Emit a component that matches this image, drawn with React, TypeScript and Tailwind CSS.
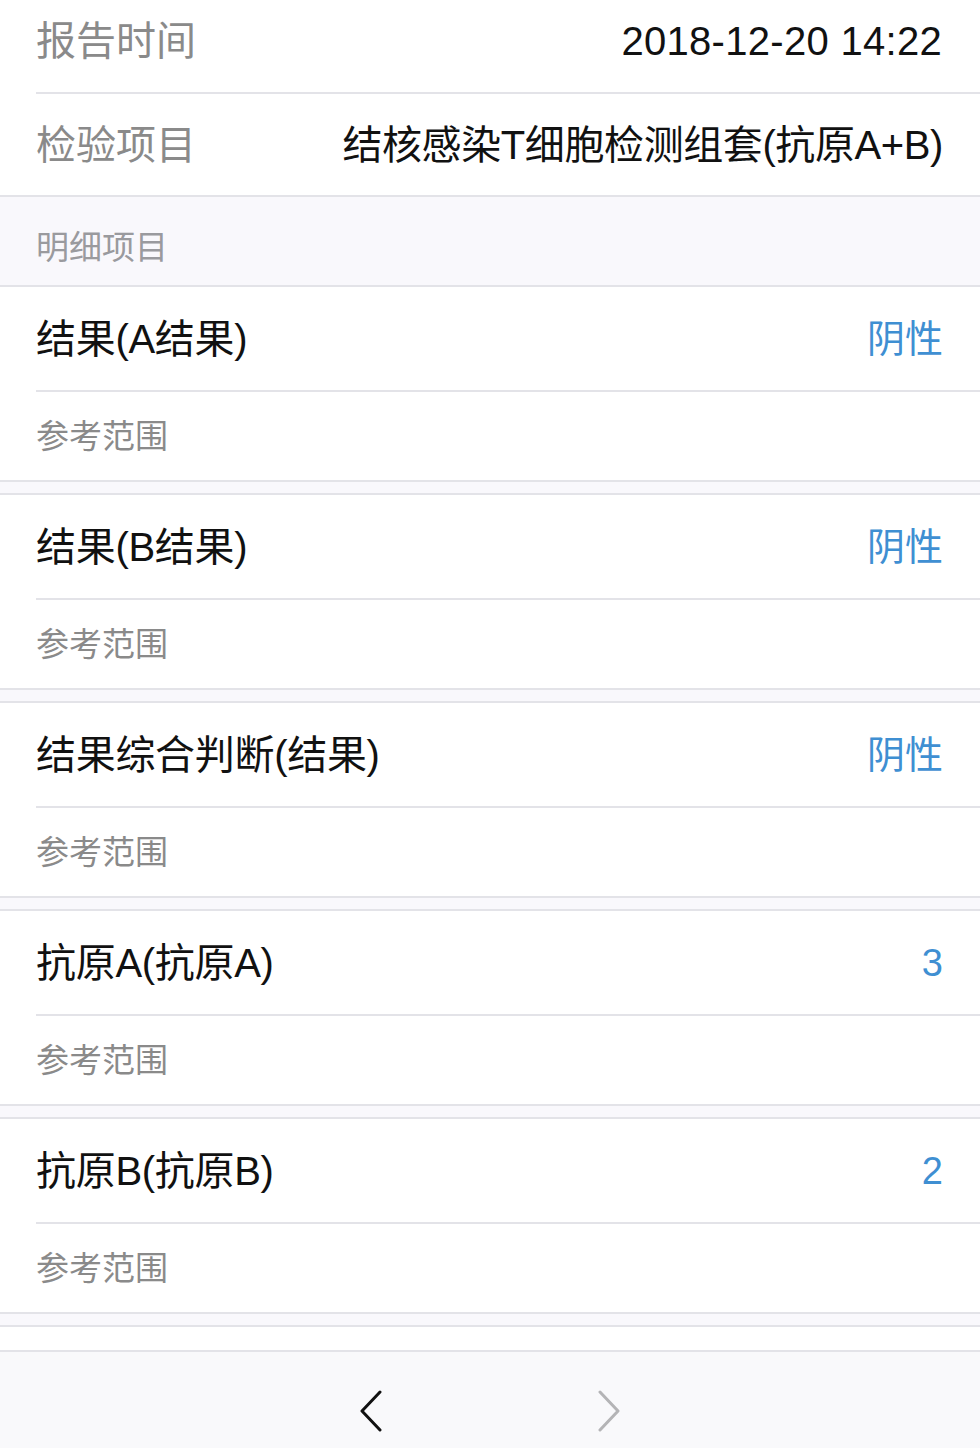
const items = [
  { name: "结果(A结果)", value: "阴性" },
  { name: "结果(B结果)", value: "阴性" },
  { name: "结果综合判断(结果)", value: "阴性" },
  { name: "抗原A(抗原A)", value: "3" },
  { name: "抗原B(抗原B)", value: "2" },
];

const font = {
  fontFamily: '"Liberation Sans", "Noto Sans CJK SC", sans-serif',
};

function ResultGroup({ name, value }: { name: string; value: string }) {
  return (
    <div>
      <div className="border-t-2 border-[#e3e3e8] bg-white">
        <div className="ml-[36px] flex h-[105px] items-center justify-between border-b-2 border-[#e3e3e8] pr-[37px]">
          <span className="text-[40px] leading-[44px] tracking-[-0.3px] text-[#111]">{name}</span>
          <span className="text-[38px] leading-[44px] text-[#3f8fd2]">{value}</span>
        </div>
        <div className="flex h-[88px] items-center pl-[36px] pt-[2px]">
          <span className="text-[33px] leading-[36px] text-[#8a8a8a]">参考范围</span>
        </div>
      </div>
      <div className="h-[13px] border-t-2 border-[#e3e3e8] bg-[#f9f8fc]" />
    </div>
  );
}

export default function App() {
  return (
    <div className="flex h-[1448px] w-[980px] flex-col overflow-hidden bg-white" style={font}>
      <div className="bg-white">
        <div className="ml-[36px] flex h-[94px] items-center justify-between border-b-2 border-[#e3e3e8] pb-[10px] pr-[38px]">
          <span className="text-[40px] leading-[44px] text-[#8a8a8a]">报告时间</span>
          <span className="text-[40px] leading-[44px] tracking-[0.3px] text-[#111]">2018-12-20 14:22</span>
        </div>
        <div className="flex h-[103px] items-center justify-between border-b-2 border-[#e3e3e8] pl-[36px] pr-[37px]">
          <span className="text-[40px] leading-[44px] text-[#8a8a8a]">检验项目</span>
          <span className="text-[40px] leading-[44px] tracking-[-0.4px] text-[#111]">
            结核感染T细胞检测组套(抗原A+B)
          </span>
        </div>
      </div>

      <div className="flex h-[88px] items-center bg-[#f9f8fc] pl-[36px] pt-[14px]">
        <span className="text-[33px] leading-[36px] text-[#9a9a9e]">明细项目</span>
      </div>

      {items.map((item) => (
        <ResultGroup key={item.name} name={item.name} value={item.value} />
      ))}

      <div className="h-[25px] border-t-2 border-[#e3e3e8] bg-white" />

      <div className="flex flex-1 items-center border-t-2 border-[#e3e3e8] bg-[#f9f9fb] pt-[22px]">
        <div className="flex w-full items-center justify-center gap-[214px]">
          <svg width="24" height="42" viewBox="0 0 24 42" fill="none">
            <path d="M21 2 L3 21 L21 40" stroke="#111" strokeWidth="3" strokeLinecap="round" strokeLinejoin="round" />
          </svg>
          <svg width="24" height="42" viewBox="0 0 24 42" fill="none">
            <path d="M3 2 L21 21 L3 40" stroke="#b4b4b6" strokeWidth="3" strokeLinecap="round" strokeLinejoin="round" />
          </svg>
        </div>
      </div>
    </div>
  );
}
